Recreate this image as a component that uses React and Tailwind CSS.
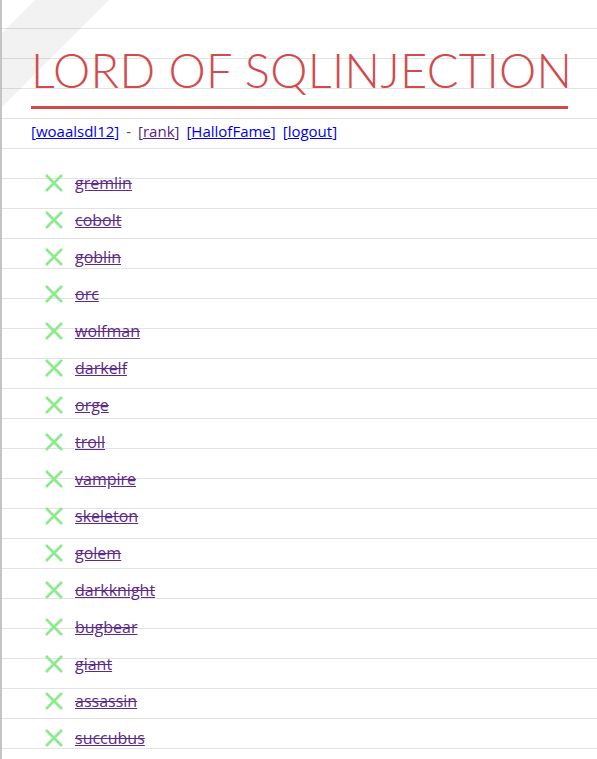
import React from 'react';

const stages = [
  'gremlin', 'cobolt', 'goblin', 'orc', 'wolfman', 'darkelf', 'orge', 'troll',
  'vampire', 'skeleton', 'golem', 'darkknight', 'bugbear', 'giant', 'assassin',
  'succubus',
];

function Cross() {
  return (
    <svg width="18" height="18" viewBox="0 0 18 18" className="shrink-0">
      <path d="M2 2L16 16M16 2L2 16" stroke="#8fe98f" strokeWidth="2.8" strokeLinecap="square" />
    </svg>
  );
}

function NavLink({ children, visited }) {
  return (
    <span className={visited ? 'text-[#551a8b]' : 'text-[#0000ee]'}>
      [<a href="#" className="underline">{children}</a>]
    </span>
  );
}

export default function App() {
  return (
    <div className="relative h-[759px] overflow-hidden border-l-2 border-[#c4c4c4] bg-white bg-[linear-gradient(to_bottom,transparent_28px,#e3e3e3_28px,#e3e3e3_29px,transparent_29px)] bg-[length:100%_30px] font-['Open_Sans',sans-serif]">
      {/* diagonal band top-left */}
      <svg className="absolute left-0 top-0 pointer-events-none" width="120" height="120">
        <polygon points="33,0 107,0 0,107 0,33" fill="rgba(0,0,0,0.05)" />
      </svg>

      <div className="relative pl-[29px] pt-[38px]">
        <h1 className="w-[537px] whitespace-nowrap border-b-[3px] border-[#d24b4b] pb-[4px] font-['Lato',sans-serif] text-[47px] font-light leading-[64px] tracking-[0.3px] text-[#d24b4b]">
          LORD OF SQLINJECTION
        </h1>

        <div className="mt-[10px] text-[15px] leading-[24px]">
          <NavLink>woaalsdl12</NavLink>
          <span className="mx-[7px] text-[#555]">-</span>
          <NavLink visited>rank</NavLink>
          <span className="ml-[7px]" />
          <NavLink>HallofFame</NavLink>
          <span className="ml-[7px]" />
          <NavLink>logout</NavLink>
        </div>

        <ul className="mt-[21px] pl-[14px]">
          {stages.map((s) => (
            <li key={s} className="flex h-[37px] items-center gap-[12px]">
              <Cross />
              <a
                href="#"
                className="text-[16px] text-[#5b2a8a] [text-decoration-line:underline_line-through]"
              >
                {s}
              </a>
            </li>
          ))}
        </ul>
      </div>
    </div>
  );
}
